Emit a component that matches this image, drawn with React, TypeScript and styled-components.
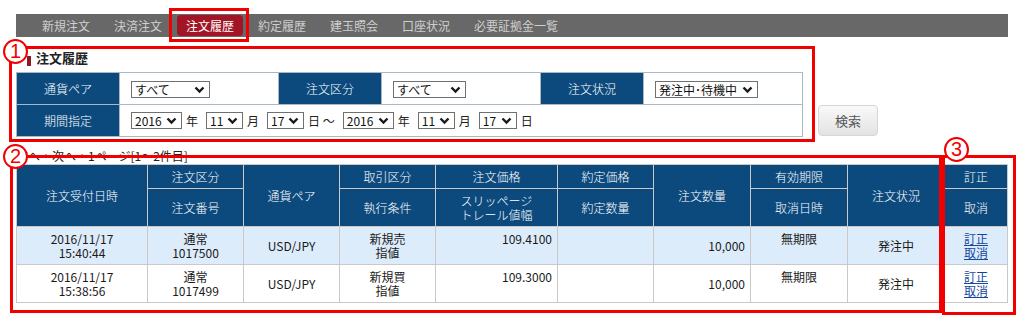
import React from "react";
import styled, { createGlobalStyle } from "styled-components";

const GlobalStyle = createGlobalStyle`
  html, body {
    margin: 0;
    padding: 0;
    background: #fff;
  }
  body {
    font-family: "Noto Sans CJK JP", "Liberation Sans", sans-serif;
    font-size: 12px;
    color: #222;
  }
`;

const tabs = ["新規注文", "決済注文", "注文履歴", "約定履歴", "建玉照会", "口座状況", "必要証拠金一覧"];

type Order = {
  date: string;
  time: string;
  kind: string;
  no: string;
  pair: string;
  side: string;
  cond: string;
  price: string;
  qty: string;
  expiry: string;
  status: string;
};

const orders: Order[] = [
  {
    date: "2016/11/17",
    time: "15:40:44",
    kind: "通常",
    no: "1017500",
    pair: "USD/JPY",
    side: "新規売",
    cond: "指値",
    price: "109.4100",
    qty: "10,000",
    expiry: "無期限",
    status: "発注中",
  },
  {
    date: "2016/11/17",
    time: "15:38:56",
    kind: "通常",
    no: "1017499",
    pair: "USD/JPY",
    side: "新規買",
    cond: "指値",
    price: "109.3000",
    qty: "10,000",
    expiry: "無期限",
    status: "発注中",
  },
];

function Chevron() {
  return (
    <svg width="11" height="8" viewBox="0 0 11 8">
      <polyline points="1.5,1.5 5.5,5.5 9.5,1.5" fill="none" stroke="#1a1a1a" strokeWidth="2.4" />
    </svg>
  );
}

function FakeSelect({ value, width }: { value: string; width: number }) {
  return (
    <Select $width={width}>
      <span>{value}</span>
      <Chevron />
    </Select>
  );
}

function App() {
  return (
    <Page>
      <GlobalStyle />
      <Nav>
        {tabs.map((t) => (
          <Tab key={t} $active={t === "注文履歴"}>
            <span>{t}</span>
          </Tab>
        ))}
      </Nav>

      <Heading>注文履歴</Heading>

      <FilterRow>
        <FilterTable>
          <tbody>
            <tr>
              <LabelCell>通貨ペア</LabelCell>
              <ValueCell>
                <FakeSelect value="すべて" width={79} />
              </ValueCell>
              <LabelCell>注文区分</LabelCell>
              <ValueCell>
                <FakeSelect value="すべて" width={73} />
              </ValueCell>
              <LabelCell>注文状況</LabelCell>
              <ValueCell>
                <FakeSelect value="発注中･待機中" width={103} />
              </ValueCell>
            </tr>
            <tr>
              <LabelCell>期間指定</LabelCell>
              <ValueCell colSpan={5}>
                <DateLine>
                  <FakeSelect value="2016" width={51} />
                  <Unit>年</Unit>
                  <FakeSelect value="11" width={37} />
                  <Unit>月</Unit>
                  <FakeSelect value="17" width={37} />
                  <Unit>日 ～</Unit>
                  <FakeSelect value="2016" width={51} />
                  <Unit>年</Unit>
                  <FakeSelect value="11" width={37} />
                  <Unit>月</Unit>
                  <FakeSelect value="17" width={38} />
                  <Unit>日</Unit>
                </DateLine>
              </ValueCell>
            </tr>
          </tbody>
        </FilterTable>
        <SearchButton>検索</SearchButton>
      </FilterRow>

      <Pager>前へ・次へ・1ページ[1～2件目]</Pager>

      <OrderTable>
        <colgroup>
          <col style={{ width: 131 }} />
          <col style={{ width: 96 }} />
          <col style={{ width: 96 }} />
          <col style={{ width: 96 }} />
          <col style={{ width: 122 }} />
          <col style={{ width: 96 }} />
          <col style={{ width: 97 }} />
          <col style={{ width: 97 }} />
          <col style={{ width: 97 }} />
          <col style={{ width: 63 }} />
        </colgroup>
        <thead>
          <HeadRow $h={24}>
            <Th rowSpan={2}>注文受付日時</Th>
            <Th>注文区分</Th>
            <Th rowSpan={2}>通貨ペア</Th>
            <Th>取引区分</Th>
            <Th>注文価格</Th>
            <Th>約定価格</Th>
            <Th rowSpan={2}>注文数量</Th>
            <Th>有効期限</Th>
            <Th rowSpan={2}>注文状況</Th>
            <Th>訂正</Th>
          </HeadRow>
          <HeadRow $h={38}>
            <Th>注文番号</Th>
            <Th>執行条件</Th>
            <Th>
              スリッページ
              <br />
              トレール値幅
            </Th>
            <Th>約定数量</Th>
            <Th>取消日時</Th>
            <Th>取消</Th>
          </HeadRow>
        </thead>
        <tbody>
          {orders.map((o, i) => (
            <DataRow key={o.no} $alt={i % 2 === 0}>
              <Td>
                {o.date}
                <br />
                {o.time}
              </Td>
              <Td>
                {o.kind}
                <br />
                {o.no}
              </Td>
              <Td>{o.pair}</Td>
              <Td>
                {o.side}
                <br />
                {o.cond}
              </Td>
              <Td $align="right">
                {o.price}
                <br />
                &nbsp;
              </Td>
              <Td />
              <Td $align="right">{o.qty}</Td>
              <Td>
                {o.expiry}
                <br />
                &nbsp;
              </Td>
              <Td>{o.status}</Td>
              <Td>
                <LinkText href="#">訂正</LinkText>
                <br />
                <LinkText href="#">取消</LinkText>
              </Td>
            </DataRow>
          ))}
        </tbody>
      </OrderTable>

      {/* annotation overlays */}
      <Mark $x={169} $y={8} $w={80} $h={34} />
      <Mark $x={9} $y={46} $w={806} $h={96} />
      <Mark $x={10} $y={155} $w={932} $h={158} />
      <Mark $x={942} $y={155} $w={74} $h={160} />
      <Circle $x={3} $y={39}>1</Circle>
      <Circle $x={3} $y={144}>2</Circle>
      <Circle $x={944} $y={137}>3</Circle>
    </Page>
  );
}

const Page = styled.div`
  position: relative;
  width: 1022px;
  height: 326px;
  padding: 14px 0 0 16px;
  box-sizing: border-box;
  overflow: hidden;
`;

const Nav = styled.nav`
  display: flex;
  align-items: center;
  width: 992px;
  height: 23px;
  padding-left: 14px;
  box-sizing: border-box;
  background: #686868;
`;

const Tab = styled.div<{ $active?: boolean }>`
  display: flex;
  align-items: center;
  height: 100%;
  padding: 0 3px;

  span {
    display: block;
    padding: 0 9px;
    height: 21px;
    line-height: 21px;
    font-size: 12px;
    border-radius: 4px;
    color: ${({ $active }) => ($active ? "#fff" : "#cfcfcf")};
    background: ${({ $active }) => ($active ? "#a21526" : "transparent")};
  }
`;

const Heading = styled.h2`
  margin: 13px 0 0 0;
  padding-left: 20px;
  position: relative;
  height: 16px;
  line-height: 16px;
  font-size: 13px;
  font-weight: bold;
  color: #222;

  &::before {
    content: "";
    position: absolute;
    left: 11px;
    top: 6px;
    width: 4px;
    height: 10px;
    background: #8c1a24;
  }
`;

const FilterRow = styled.div`
  display: flex;
  align-items: flex-end;
  gap: 15px;
  margin-top: 6px;
`;

const FilterTable = styled.table`
  border-collapse: collapse;
  width: 787px;
  table-layout: fixed;

  td {
    border: 1px solid #aab8c6;
    height: 29px;
  }
`;

const LabelCell = styled.td`
  width: 100px;
  background: #0c4a7e;
  color: #fff;
  text-align: center;
  font-size: 12px;
  font-weight: 300;
`;

const ValueCell = styled.td`
  background: #fff;
  padding: 0 0 0 11px;
`;

const DateLine = styled.div`
  display: flex;
  align-items: center;
`;

const Unit = styled.span`
  font-size: 12px;
  margin: 0 8px 0 4px;
  white-space: pre;
`;

const Select = styled.div<{ $width: number }>`
  display: inline-flex;
  align-items: center;
  justify-content: space-between;
  width: ${({ $width }) => $width}px;
  height: 17px;
  box-sizing: border-box;
  border: 1px solid #707070;
  background: #fff;
  padding: 0 4px 0 3px;
  font-size: 12px;
  line-height: 15px;
  color: #111;
  vertical-align: middle;
`;

const SearchButton = styled.button`
  width: 60px;
  height: 31px;
  margin-bottom: 1px;
  border: 1px solid #d6d6d6;
  border-radius: 4px;
  background: linear-gradient(#f9f9f9, #e3e3e3);
  color: #555;
  font-family: inherit;
  font-size: 13px;
`;

const Pager = styled.div`
  margin-top: 11px;
  height: 16px;
  line-height: 16px;
  font-size: 12px;
  color: #222;
`;

const OrderTable = styled.table`
  border-collapse: collapse;
  table-layout: fixed;
  width: 991px;
`;

const HeadRow = styled.tr<{ $h: number }>`
  height: ${({ $h }) => $h}px;
`;

const Th = styled.th`
  background: #0c4a7e;
  color: #fff;
  font-weight: 300;
  font-size: 12px;
  line-height: 14px;
  border: 1px solid #c9c9c9;
  padding: 0;
  text-align: center;
`;

const DataRow = styled.tr<{ $alt?: boolean }>`
  height: 38px;
  background: ${({ $alt }) => ($alt ? "#ddecfb" : "#fff")};
`;

const Td = styled.td<{ $align?: "right" | "center" }>`
  border: 1px solid #c9c9c9;
  padding: 0 5px;
  font-size: 12px;
  line-height: 14px;
  color: #1a1a1a;
  text-align: ${({ $align }) => $align ?? "center"};
  vertical-align: middle;
`;

const LinkText = styled.a`
  color: #1446a0;
  text-decoration: underline;
`;

const Mark = styled.div<{ $x: number; $y: number; $w: number; $h: number }>`
  position: absolute;
  left: ${({ $x }) => $x}px;
  top: ${({ $y }) => $y}px;
  width: ${({ $w }) => $w}px;
  height: ${({ $h }) => $h}px;
  box-sizing: border-box;
  border: 3px solid #f20000;
  pointer-events: none;
`;

const Circle = styled.div<{ $x: number; $y: number }>`
  position: absolute;
  left: ${({ $x }) => $x}px;
  top: ${({ $y }) => $y}px;
  width: 25px;
  height: 25px;
  box-sizing: border-box;
  border: 2px solid #f20000;
  border-radius: 50%;
  background: #fff;
  color: #f20000;
  font-family: "Liberation Sans", sans-serif;
  font-size: 20px;
  line-height: 21px;
  text-align: center;
`;

export default App;
